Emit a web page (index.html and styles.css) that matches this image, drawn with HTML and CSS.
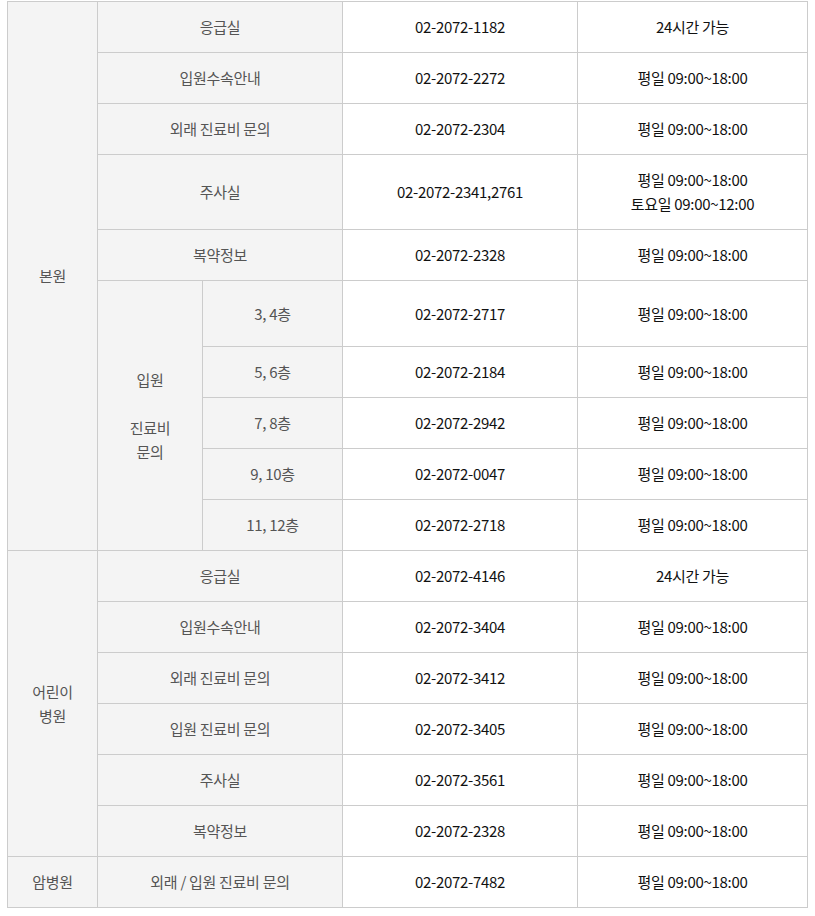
FILE: index.html
```html
<!DOCTYPE html>
<html>
<head>
  <meta charset="utf-8">
  <link rel="stylesheet" href="styles.css">
</head>
<body>
  <table class="tel-table">
    <colgroup>
      <col class="c-site">
      <col class="c-sub">
      <col class="c-floor">
      <col class="c-tel">
      <col class="c-time">
    </colgroup>
    <tbody>
      <tr>
        <th rowspan="10" class="site">본원</th>
        <th colspan="2">응급실</th>
        <td>02-2072-1182</td>
        <td>24시간 가능</td>
      </tr>
      <tr>
        <th colspan="2">입원수속안내</th>
        <td>02-2072-2272</td>
        <td>평일 09:00~18:00</td>
      </tr>
      <tr>
        <th colspan="2">외래 진료비 문의</th>
        <td>02-2072-2304</td>
        <td>평일 09:00~18:00</td>
      </tr>
      <tr class="tall">
        <th colspan="2">주사실</th>
        <td>02-2072-2341,2761</td>
        <td>평일 09:00~18:00<br>토요일 09:00~12:00</td>
      </tr>
      <tr>
        <th colspan="2">복약정보</th>
        <td>02-2072-2328</td>
        <td>평일 09:00~18:00</td>
      </tr>
      <tr class="floor-first">
        <th rowspan="5" class="sub">입원<br><br>진료비<br>문의</th>
        <th>3, 4층</th>
        <td>02-2072-2717</td>
        <td>평일 09:00~18:00</td>
      </tr>
      <tr>
        <th>5, 6층</th>
        <td>02-2072-2184</td>
        <td>평일 09:00~18:00</td>
      </tr>
      <tr>
        <th>7, 8층</th>
        <td>02-2072-2942</td>
        <td>평일 09:00~18:00</td>
      </tr>
      <tr>
        <th>9, 10층</th>
        <td>02-2072-0047</td>
        <td>평일 09:00~18:00</td>
      </tr>
      <tr>
        <th>11, 12층</th>
        <td>02-2072-2718</td>
        <td>평일 09:00~18:00</td>
      </tr>
      <tr>
        <th rowspan="6" class="site">어린이<br>병원</th>
        <th colspan="2">응급실</th>
        <td>02-2072-4146</td>
        <td>24시간 가능</td>
      </tr>
      <tr>
        <th colspan="2">입원수속안내</th>
        <td>02-2072-3404</td>
        <td>평일 09:00~18:00</td>
      </tr>
      <tr>
        <th colspan="2">외래 진료비 문의</th>
        <td>02-2072-3412</td>
        <td>평일 09:00~18:00</td>
      </tr>
      <tr>
        <th colspan="2">입원 진료비 문의</th>
        <td>02-2072-3405</td>
        <td>평일 09:00~18:00</td>
      </tr>
      <tr>
        <th colspan="2">주사실</th>
        <td>02-2072-3561</td>
        <td>평일 09:00~18:00</td>
      </tr>
      <tr>
        <th colspan="2">복약정보</th>
        <td>02-2072-2328</td>
        <td>평일 09:00~18:00</td>
      </tr>
      <tr>
        <th class="site">암병원</th>
        <th colspan="2">외래 / 입원 진료비 문의</th>
        <td>02-2072-7482</td>
        <td>평일 09:00~18:00</td>
      </tr>
    </tbody>
  </table>
</body>
</html>
```

FILE: styles.css
```css
html, body {
  margin: 0;
  padding: 0;
  background: #fff;
}
body {
  padding: 1px 0 0 7px;
  font-family: "Noto Sans CJK KR", "Noto Sans", sans-serif;
  font-size: 15px;
}
.tel-table {
  width: 800px;
  border-collapse: collapse;
  table-layout: fixed;
  border: 1px solid #cccccc;
}
.c-site {
  width: 90px;
}
.c-sub {
  width: 105px;
}
.c-floor {
  width: 140px;
}
.c-tel {
  width: 235px;
}
.c-time {
  width: 230px;
}
.tel-table tr {
  height: 51px;
}
.tel-table tr.tall {
  height: 75px;
}
.tel-table tr.floor-first {
  height: 66px;
}
.tel-table th,
.tel-table td {
  border: 1px solid #cccccc;
  padding: 0 4px;
  text-align: center;
  vertical-align: middle;
  line-height: 24px;
  letter-spacing: -0.3px;
}
.tel-table th {
  background: #f4f4f4;
  color: #555;
  font-weight: normal;
}
.tel-table td {
  color: #111;
}
```
